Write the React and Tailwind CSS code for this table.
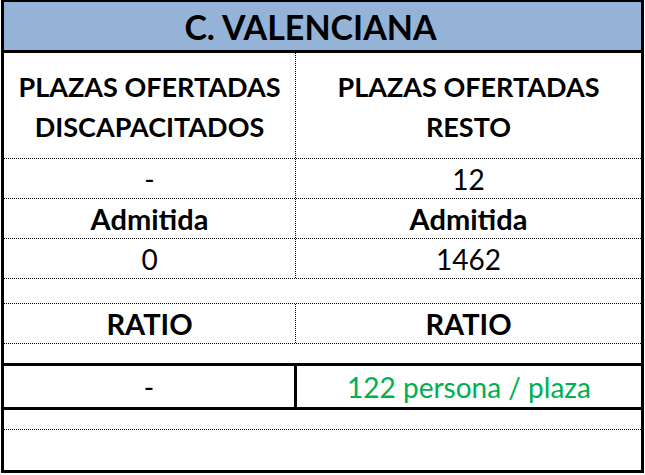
export default function App() {
  const font = { fontFamily: "Lato, 'Liberation Sans', sans-serif" };

  return (
    <div className="w-[645px] h-[475px] bg-white" style={font}>
      <div className="ml-px w-[643px] border-x-[3px] border-t-2 border-b-[3px] border-black text-black">
        {/* HEADER */}
        <div className="h-[51px] bg-[#95b3d7] border-b-[3px] border-black flex items-center justify-center pr-[24px]">
          <span className="text-[34px] font-bold leading-none pt-[2px]">C. VALENCIANA</span>
        </div>

        {/* TITLES */}
        <div className="flex h-[106px] border-b border-dotted border-black">
          <div className="w-[292px] border-r border-dotted border-black flex items-center justify-center text-center text-[27px] font-bold leading-[40px] pt-[2px]">
            PLAZAS OFERTADAS
            <br />
            DISCAPACITADOS
          </div>
          <div className="flex-1 flex items-center justify-center text-center text-[27px] font-bold leading-[40px] pt-[2px]">
            PLAZAS OFERTADAS
            <br />
            RESTO
          </div>
        </div>

        <Row left="-" right="12" />
        <Row left="Admitida" right="Admitida" bold />
        <Row left="0" right="1462" />

        <div className="h-[25px] border-b border-dotted border-black" />

        <Row left="RATIO" right="RATIO" bold />

        <div className="h-[22px] border-b-[3px] border-black" />

        {/* RESULT */}
        <div className="flex h-[44px] border-b-[3px] border-black text-[28px]">
          <div className="w-[293px] border-r-[3px] border-black flex items-center justify-center">
            -
          </div>
          <div className="flex-1 flex items-center justify-center text-[#00b050]">
            122 persona / plaza
          </div>
        </div>

        <div className="h-[20px] border-b border-dotted border-black" />
        <div className="h-[40px]" />
      </div>
    </div>
  );
}

function Row({ left, right, bold }) {
  const weight = bold ? "font-bold text-[29px]" : "text-[28px]";
  return (
    <div className={`flex h-[40px] border-b border-dotted border-black ${weight}`}>
      <div className="w-[292px] border-r border-dotted border-black flex items-center justify-center">
        {left}
      </div>
      <div className="flex-1 flex items-center justify-center">{right}</div>
    </div>
  );
}
